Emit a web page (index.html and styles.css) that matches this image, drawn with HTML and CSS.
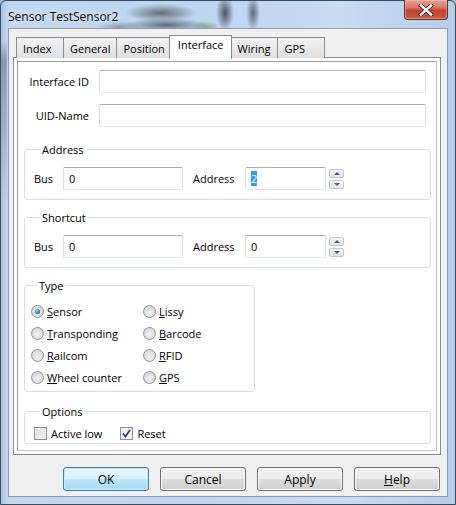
FILE: index.html
```html
<!DOCTYPE html>
<html lang="en">
<head>
    <meta charset="UTF-8">
    <title>Sensor TestSensor2</title>
    <link rel="stylesheet" href="styles.css">
</head>
<body>
    <div class="window">
        <div class="titlebar">
            <span class="title">Sensor TestSensor2</span>
            <div class="close-btn">
                <svg width="16" height="12" viewBox="0 0 16 12">
                    <path d="M3 1.5 L13 10.5 M13 1.5 L3 10.5" stroke="#4a2a28" stroke-width="4.2" stroke-linecap="square"/>
                    <path d="M3 1.5 L13 10.5 M13 1.5 L3 10.5" stroke="#fff" stroke-width="2.4" stroke-linecap="square"/>
                </svg>
            </div>
        </div>

        <div class="client">
            <div class="tabs">
                <div class="tab">Index</div>
                <div class="tab">General</div>
                <div class="tab">Position</div>
                <div class="tab active">Interface</div>
                <div class="tab">Wiring</div>
                <div class="tab">GPS</div>
            </div>

            <div class="tab-page">
                <div class="page-frame">
                    <div class="field-row">
                        <label class="field-label">Interface ID</label>
                        <div class="text-input wide"></div>
                    </div>
                    <div class="field-row">
                        <label class="field-label">UID-Name</label>
                        <div class="text-input wide"></div>
                    </div>

                    <fieldset class="group">
                        <legend>Address</legend>
                        <div class="pair-row">
                            <label class="bus-label">Bus</label>
                            <div class="text-input bus-input">0</div>
                            <label class="addr-label">Address</label>
                            <div class="text-input addr-input"><span class="selected-text">2</span></div>
                            <div class="spin">
                                <span class="spin-btn up"></span>
                                <span class="spin-btn down"></span>
                            </div>
                        </div>
                    </fieldset>

                    <fieldset class="group">
                        <legend>Shortcut</legend>
                        <div class="pair-row">
                            <label class="bus-label">Bus</label>
                            <div class="text-input bus-input">0</div>
                            <label class="addr-label">Address</label>
                            <div class="text-input addr-input">0</div>
                            <div class="spin">
                                <span class="spin-btn up"></span>
                                <span class="spin-btn down"></span>
                            </div>
                        </div>
                    </fieldset>

                    <fieldset class="group type-group">
                        <legend>Type</legend>
                        <div class="radio-grid">
                            <div class="radio checked"><span class="radio-dot"></span><span><u>S</u>ensor</span></div>
                            <div class="radio"><span class="radio-dot"></span><span><u>L</u>issy</span></div>
                            <div class="radio"><span class="radio-dot"></span><span><u>T</u>ransponding</span></div>
                            <div class="radio"><span class="radio-dot"></span><span><u>B</u>arcode</span></div>
                            <div class="radio"><span class="radio-dot"></span><span><u>R</u>ailcom</span></div>
                            <div class="radio"><span class="radio-dot"></span><span><u>R</u>FID</span></div>
                            <div class="radio"><span class="radio-dot"></span><span><u>W</u>heel counter</span></div>
                            <div class="radio"><span class="radio-dot"></span><span><u>G</u>PS</span></div>
                        </div>
                    </fieldset>

                    <fieldset class="group options-group">
                        <legend>Options</legend>
                        <div class="check-row">
                            <div class="check"><span class="check-box"></span>Active low</div>
                            <div class="check checked">
                                <span class="check-box">
                                    <svg width="9" height="9" viewBox="0 0 9 9"><path d="M1 4.5 L3.5 7.5 L8 1" fill="none" stroke="#2a3f8f" stroke-width="1.8"/></svg>
                                </span>Reset
                            </div>
                        </div>
                    </fieldset>
                </div>
            </div>

            <div class="button-row">
                <div class="btn default">OK</div>
                <div class="btn">Cancel</div>
                <div class="btn">Apply</div>
                <div class="btn"><u>H</u>elp</div>
            </div>
        </div>
    </div>
</body>
</html>
```

FILE: styles.css
```css
* {
    margin: 0;
    padding: 0;
    box-sizing: border-box;
}

body {
    width: 456px;
    height: 505px;
    overflow: hidden;
    font-family: "Open Sans", "Noto Sans", sans-serif;
    font-size: 11px;
    color: #000;
    background: #9fbcd9;
}

/* Aero frame with the blurred desktop showing through the glass */
.window {
    width: 456px;
    height: 505px;
    border: 1px solid #3c4a5c;
    border-radius: 6px 6px 0 0;
    background:
        radial-gradient(ellipse 36px 9px at 160px 12px, rgba(35, 45, 40, 0.6), transparent),
        radial-gradient(ellipse 42px 7px at 165px 24px, rgba(30, 40, 35, 0.6), transparent),
        radial-gradient(ellipse 9px 18px at 224px 12px, rgba(25, 30, 35, 0.7), transparent),
        radial-gradient(ellipse 7px 18px at 252px 12px, rgba(25, 30, 35, 0.6), transparent),
        radial-gradient(ellipse 14px 6px at 205px 26px, rgba(70, 110, 40, 0.45), transparent),
        radial-gradient(ellipse 22px 6px at 118px 26px, rgba(60, 70, 80, 0.4), transparent),
        linear-gradient(180deg, transparent 0, transparent 40px, rgba(40, 60, 90, 0.35) 60px, transparent 200px) 0 0 / 6px 100% no-repeat,
        linear-gradient(90deg, #aac6e4 0, #c4d9ef 8px, #bcd4ee 40%, #c9ddf2 75%, #b4cde9 100%);
    display: flex;
    flex-direction: column;
}

.titlebar {
    height: 27px;
    display: flex;
    justify-content: space-between;
    align-items: flex-start;
    padding-left: 7px;
}

.title {
    margin-top: 7px;
    font-size: 12px;
    color: #0a0a14;
    text-shadow: 0 0 6px rgba(255, 255, 255, 0.9);
}

.close-btn {
    width: 44px;
    height: 20px;
    margin-right: 7px;
    margin-top: -1px;
    border: 1px solid #5e2b25;
    border-top: none;
    border-radius: 0 0 4px 4px;
    background: linear-gradient(#e7a596 0, #d6775f 40%, #c0432a 55%, #c85a3e 100%);
    box-shadow: inset 0 0 0 1px rgba(255, 200, 190, 0.5);
    display: flex;
    align-items: center;
    justify-content: center;
}

/* Client area */
.client {
    flex: 1;
    margin: 0 7px 7px 7px;
    background: #f0f0f0;
    border: 1px solid #8b9cb0;
    display: flex;
    flex-direction: column;
}

.tabs {
    display: flex;
    padding: 6px 0 0 7px;
    height: 29px;
    position: relative;
    z-index: 1;
}

.tab {
    min-width: 48px;
    height: 21px;
    margin-top: 2px;
    padding: 3px 6px 0;
    border: 1px solid #898c95;
    border-bottom: none;
    margin-right: -1px;
    background: linear-gradient(#f2f2f2, #e0e0e0);
    white-space: nowrap;
}

.tab.active {
    height: 24px;
    margin: 0 -2px 0 -2px;
    padding: 1px 8px 0;
    background: #fff;
    position: relative;
    z-index: 2;
}

.tab-page {
    margin: -1px 6px 0 4px;
    height: 398px;
    border: 1px solid #898c95;
    background: #fff;
    padding: 3px;
}

.page-frame {
    height: 100%;
    border: 1px solid #a0a0a0;
    border-right-color: #c8c8c8;
    border-bottom-color: #c8c8c8;
    padding: 8px 5px 0 6px;
}

/* Text fields */
.field-row {
    display: flex;
    align-items: center;
    margin-bottom: 11px;
}

.field-label {
    width: 65px;
    text-align: right;
    margin-right: 10px;
}

.text-input {
    height: 23px;
    border: 1px solid #dbdfe6;
    border-top-color: #abadb3;
    border-bottom-color: #e3e9ef;
    border-radius: 2px;
    background: #fff;
    padding: 3px 5px 0;
}

.text-input.wide {
    width: 327px;
}

/* Group boxes */
.group {
    border: 1px solid #d5dfe5;
    border-radius: 3px;
    margin-top: 15px;
    padding: 10px 0 9px 9px;
    width: 407px;
}

.group legend {
    margin-left: 6px;
    padding: 0 2px;
    line-height: 15px;
}

.group + .group {
    margin-top: 10px;
}

.pair-row {
    display: flex;
    align-items: center;
}

.bus-label {
    width: 29px;
}

.bus-input {
    width: 120px;
}

.addr-label {
    margin-left: 10px;
    width: 52px;
}

.addr-input {
    width: 81px;
}

.selected-text {
    background: #3399ff;
    color: #fff;
}

.spin {
    display: flex;
    flex-direction: column;
    gap: 2px;
    margin-left: 3px;
}

.spin-btn {
    width: 15px;
    height: 9px;
    border: 1px solid #c4c7cc;
    border-radius: 2px;
    background: linear-gradient(#f6f6f6, #e3e3e3);
    display: flex;
    align-items: center;
    justify-content: center;
}

.spin-btn::after {
    content: "";
    border-left: 3px solid transparent;
    border-right: 3px solid transparent;
}

.spin-btn.up::after {
    border-bottom: 3px solid #4d5b78;
}

.spin-btn.down::after {
    border-top: 3px solid #4d5b78;
}

/* Radio buttons */
.type-group {
    width: 231px;
    padding: 7px 0 3px 6px;
}

.radio-grid {
    display: grid;
    grid-template-columns: 112px 1fr;
    grid-auto-rows: 22px;
}

.radio {
    display: flex;
    align-items: center;
}

.radio-dot {
    width: 13px;
    height: 13px;
    border-radius: 50%;
    border: 1px solid #8e8f8f;
    background: radial-gradient(circle at 50% 60%, #f4f4f4 0, #d9d9d9 70%, #c8c8c8 100%);
    margin-right: 3px;
    display: flex;
    align-items: center;
    justify-content: center;
}

.radio.checked .radio-dot::after {
    content: "";
    width: 5px;
    height: 5px;
    border-radius: 50%;
    background: radial-gradient(circle at 40% 35%, #8fd0f5, #1b62a6 70%, #0d3f73);
}

/* Checkboxes */
.group.options-group {
    margin-top: 12px;
    padding: 6px 0 1px 9px;
}

.check-row {
    display: flex;
}

.check {
    display: flex;
    align-items: center;
    height: 17px;
}

.check + .check {
    margin-left: 18px;
}

.check-box {
    width: 13px;
    height: 13px;
    border: 1px solid #8e8f8f;
    background: linear-gradient(135deg, #dcdcdc, #f6f6f6);
    box-shadow: inset 0 0 0 1px #f0f0f0;
    margin-right: 4px;
    display: flex;
    align-items: center;
    justify-content: center;
}

.check.checked .check-box {
    background: linear-gradient(135deg, #e8e8e8, #fafafa);
}

/* Dialog buttons */
.button-row {
    display: flex;
    justify-content: flex-end;
    gap: 11px;
    padding: 12px 7px 0 0;
    font-size: 12px;
}

.btn {
    width: 86px;
    height: 24px;
    border: 1px solid #707070;
    border-radius: 3px;
    background: linear-gradient(#f2f2f2 0, #ebebeb 48%, #dddddd 52%, #cfcfcf 100%);
    box-shadow: inset 0 0 0 1px #fcfcfc;
    display: flex;
    align-items: center;
    justify-content: center;
}

.btn.default {
    border-color: #3c7fb1;
    background: linear-gradient(#eaf6fd 0, #d9f0fc 48%, #bee6fd 52%, #a7d9f5 100%);
    box-shadow: inset 0 0 0 1px #c7e8f9;
}
```
